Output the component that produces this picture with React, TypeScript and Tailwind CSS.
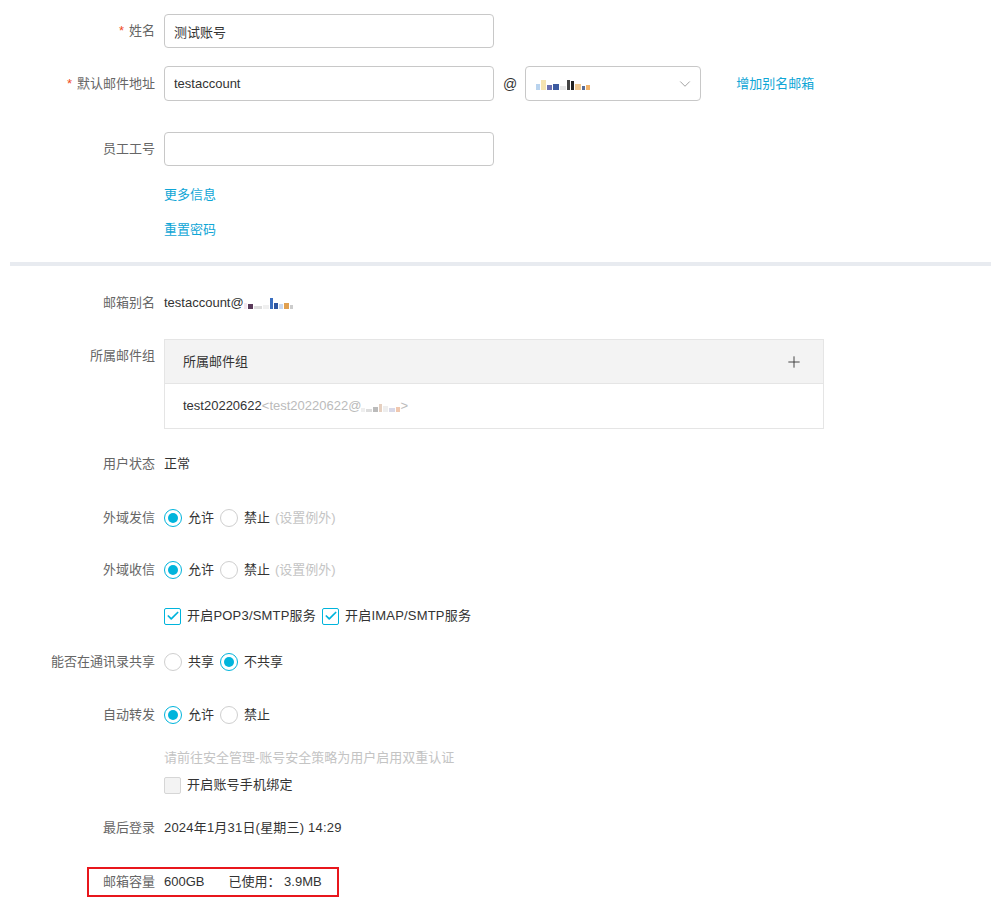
import React from "react";
import { Plus, ChevronDown, Check } from "lucide-react";

const FONT = { fontFamily: '"Liberation Sans", "Noto Sans CJK SC", sans-serif' };

// pixelated placeholder for a masked domain
const Masked: React.FC<{ blocks: [string, number, number][] }> = ({ blocks }) => (
  <span className="inline-flex items-end h-[12px] gap-[1px]">
    {blocks.map(([c, w, h], i) => (
      <span key={i} className="inline-block" style={{ background: c, width: w, height: h }} />
    ))}
  </span>
);

const Label: React.FC<{ children: React.ReactNode; required?: boolean }> = ({ children, required }) => (
  <div className="w-[155px] shrink-0 text-right text-[#666]">
    {required && <span className="text-[#f04a22] mr-[5px]">*</span>}
    {children}
  </div>
);

const Radio: React.FC<{ checked?: boolean; label: string }> = ({ checked, label }) => (
  <label className="flex items-center gap-[6px] mr-[6px]">
    <span
      className={`w-[18px] h-[18px] rounded-full border flex items-center justify-center bg-white ${
        checked ? "border-[#00b4dc]" : "border-[#cfcfcf]"
      }`}
    >
      {checked && <span className="w-[10px] h-[10px] rounded-full bg-[#00b4dc]" />}
    </span>
    <span className="text-[#333]">{label}</span>
  </label>
);

const CheckBox: React.FC<{ checked?: boolean; label: string }> = ({ checked, label }) => (
  <label className="flex items-center gap-[6px] mr-[6px]">
    <span
      className={`w-[17px] h-[17px] rounded-[2px] border flex items-center justify-center ${
        checked ? "border-[#00b4dc] bg-white" : "border-[#d6d6d6] bg-[#f3f3f3]"
      }`}
    >
      {checked && <Check size={14} strokeWidth={3} className="text-[#00b4dc]" />}
    </span>
    <span className="text-[#333] tracking-[0.2px]">{label}</span>
  </label>
);

const Row: React.FC<{ className?: string; children: React.ReactNode }> = ({ className = "", children }) => (
  <div className={`flex items-center gap-[9px] ${className}`}>{children}</div>
);

export default function App() {
  return (
    <div className="w-[991px] h-[911px] bg-white text-[13px] leading-[20px] overflow-hidden" style={FONT}>
      <div className="flex flex-col pt-[14px]">
        <Row className="h-[34px]">
          <Label required>姓名</Label>
          <input
            defaultValue="测试账号"
            className="w-[330px] h-[34px] border border-[#c8c8c8] rounded-[4px] px-[9px] text-[#333] outline-none"
          />
        </Row>

        <Row className="h-[35px] mt-[18px]">
          <Label required>默认邮件地址</Label>
          <input
            defaultValue="testaccount"
            className="w-[330px] h-[35px] border border-[#c8c8c8] rounded-[4px] px-[9px] text-[#333] outline-none"
          />
          <span className="text-[#333] text-[14px] -mr-[1px]">@</span>
          <div className="w-[176px] h-[35px] border border-[#c8c8c8] rounded-[4px] flex items-center justify-between pl-[10px] pr-[6px]">
            <Masked
              blocks={[
                ["#b9d3ee", 4, 6],
                ["#f5e3b0", 5, 10],
                ["#6b6fb0", 5, 5],
                ["#3c5aa0", 6, 6],
                ["#e8e8e8", 6, 4],
                ["#444", 3, 10],
                ["#222", 3, 9],
                ["#f0c890", 6, 6],
                ["#5a6d96", 3, 4],
                ["#f2b36a", 4, 5],
              ]}
            />
            <ChevronDown size={18} strokeWidth={1.2} className="text-[#999]" />
          </div>
          <span className="ml-[26px] text-[#0fa6d6]">增加别名邮箱</span>
        </Row>

        <Row className="h-[34px] mt-[31px]">
          <Label>员工工号</Label>
          <input className="w-[330px] h-[34px] border border-[#c8c8c8] rounded-[4px] px-[9px] outline-none" />
        </Row>

        <Row className="h-[20px] mt-[19px]">
          <Label>{""}</Label>
          <span className="text-[#0fa6d6]">更多信息</span>
        </Row>
        <Row className="h-[20px] mt-[15px]">
          <Label>{""}</Label>
          <span className="text-[#0fa6d6]">重置密码</span>
        </Row>

        <div className="ml-[10px] h-[4px] bg-[#e8ebf0] mt-[22px]" />

        <Row className="h-[20px] mt-[27px]">
          <Label>邮箱别名</Label>
          <span className="text-[#333] flex items-center">
            testaccount@
            <Masked
              blocks={[
                ["#f3e8f0", 3, 6],
                ["#5a3a5a", 5, 5],
                ["#ddd", 8, 3],
                ["#f0f0f0", 6, 4],
                ["#3a6ec0", 3, 11],
                ["#2d55a0", 4, 6],
                ["#c9d8ee", 4, 5],
                ["#e0a050", 5, 6],
                ["#ccc", 3, 4],
              ]}
            />
          </span>
        </Row>

        <div className="flex items-start gap-[9px] mt-[26px]">
          <div className="pt-[7px]">
            <Label>所属邮件组</Label>
          </div>
          <div className="w-[660px] border border-[#e5e5e5]">
            <div className="h-[44px] bg-[#f3f3f3] border-b border-[#e5e5e5] flex items-center justify-between pl-[18px] pr-[20px] text-[#333]">
              <span>所属邮件组</span>
              <Plus size={18} strokeWidth={1.2} className="text-[#333]" />
            </div>
            <div className="h-[44px] flex items-center pl-[18px] text-[#333]">
              test20220622
              <span className="text-[#bbb] flex items-center">
                &lt;test20220622@
                <Masked
                  blocks={[
                    ["#eee", 4, 4],
                    ["#ddd", 6, 3],
                    ["#bbb", 5, 5],
                    ["#e6d0c0", 3, 8],
                    ["#eee", 5, 6],
                    ["#d8d8e8", 6, 4],
                    ["#f0c8b0", 4, 5],
                  ]}
                />
                &gt;
              </span>
            </div>
          </div>
        </div>

        <Row className="h-[20px] mt-[25px]">
          <Label>用户状态</Label>
          <span className="text-[#333]">正常</span>
        </Row>

        <Row className="h-[20px] mt-[34px]">
          <Label>外域发信</Label>
          <div className="flex items-center">
            <Radio checked label="允许" />
            <Radio label="禁止" />
            <span className="text-[#c4c4c4] ml-[-1px]">(设置例外)</span>
          </div>
        </Row>

        <Row className="h-[20px] mt-[32px]">
          <Label>外域收信</Label>
          <div className="flex items-center">
            <Radio checked label="允许" />
            <Radio label="禁止" />
            <span className="text-[#c4c4c4] ml-[-1px]">(设置例外)</span>
          </div>
        </Row>

        <Row className="h-[20px] mt-[26px]">
          <Label>{""}</Label>
          <div className="flex items-center">
            <CheckBox checked label="开启POP3/SMTP服务" />
            <CheckBox checked label="开启IMAP/SMTP服务" />
          </div>
        </Row>

        <Row className="h-[20px] mt-[26px]">
          <Label>能否在通讯录共享</Label>
          <div className="flex items-center">
            <Radio label="共享" />
            <Radio checked label="不共享" />
          </div>
        </Row>

        <Row className="h-[20px] mt-[33px]">
          <Label>自动转发</Label>
          <div className="flex items-center">
            <Radio checked label="允许" />
            <Radio label="禁止" />
          </div>
        </Row>

        <Row className="h-[20px] mt-[23px]">
          <Label>{""}</Label>
          <span className="text-[#c4c4c4]">请前往安全管理-账号安全策略为用户启用双重认证</span>
        </Row>

        <Row className="h-[20px] mt-[7px]">
          <Label>{""}</Label>
          <CheckBox label="开启账号手机绑定" />
        </Row>

        <Row className="h-[20px] mt-[23px]">
          <Label>最后登录</Label>
          <span className="text-[#333] tracking-[0.2px]">2024年1月31日(星期三) 14:29</span>
        </Row>

        <div className="mt-[29px] ml-[87px] w-[252px] h-[30px] border-2 border-[#e8161c] flex items-center gap-[9px]">
          <div className="w-[66px] shrink-0 text-right text-[#666]">邮箱容量</div>
          <span className="text-[#333]">600GB</span>
          <span className="text-[#333] ml-[15px]">已使用：&nbsp;3.9MB</span>
        </div>
      </div>
    </div>
  );
}
